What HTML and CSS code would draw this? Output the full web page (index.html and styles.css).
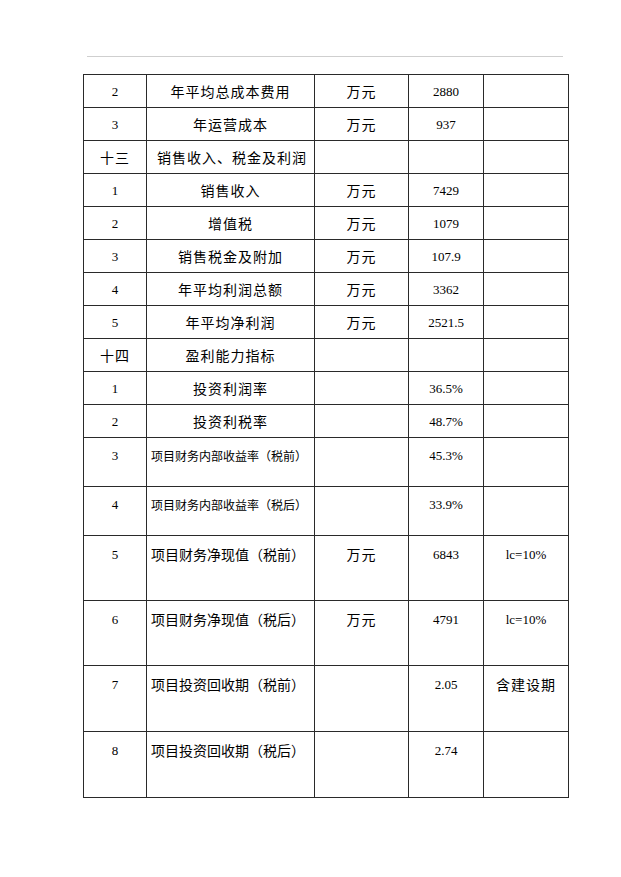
FILE: index.html
```html
<!DOCTYPE html>
<html lang="zh-CN">
<head>
<meta charset="utf-8">
<title>盈利能力指标</title>
<link rel="stylesheet" href="styles.css">
</head>
<body>
<div class="page">
  <hr class="rule">
  <table class="sheet">
    <colgroup>
      <col class="c-no"><col class="c-name"><col class="c-unit"><col class="c-val"><col class="c-note">
    </colgroup>
    <tbody>
      <tr class="r-s"><td class="num">2</td><td class="name">年平均总成本费用</td><td class="unit">万元</td><td class="num">2880</td><td></td></tr>
      <tr class="r-s"><td class="num">3</td><td class="name">年运营成本</td><td class="unit">万元</td><td class="num">937</td><td></td></tr>
      <tr class="r-s"><td class="cn">十三</td><td class="name left">销售收入、税金及利润</td><td></td><td></td><td></td></tr>
      <tr class="r-s"><td class="num">1</td><td class="name">销售收入</td><td class="unit">万元</td><td class="num">7429</td><td></td></tr>
      <tr class="r-s"><td class="num">2</td><td class="name">增值税</td><td class="unit">万元</td><td class="num">1079</td><td></td></tr>
      <tr class="r-s"><td class="num">3</td><td class="name">销售税金及附加</td><td class="unit">万元</td><td class="num">107.9</td><td></td></tr>
      <tr class="r-s"><td class="num">4</td><td class="name">年平均利润总额</td><td class="unit">万元</td><td class="num">3362</td><td></td></tr>
      <tr class="r-s"><td class="num">5</td><td class="name">年平均净利润</td><td class="unit">万元</td><td class="num">2521.5</td><td></td></tr>
      <tr class="r-s"><td class="cn">十四</td><td class="name">盈利能力指标</td><td></td><td></td><td></td></tr>
      <tr class="r-s"><td class="num">1</td><td class="name">投资利润率</td><td></td><td class="num">36.5%</td><td></td></tr>
      <tr class="r-s"><td class="num">2</td><td class="name">投资利税率</td><td></td><td class="num">48.7%</td><td></td></tr>
      <tr class="r-m"><td class="num">3</td><td class="name small">项目财务内部收益率（税前）</td><td></td><td class="num">45.3%</td><td></td></tr>
      <tr class="r-m"><td class="num">4</td><td class="name small">项目财务内部收益率（税后）</td><td></td><td class="num">33.9%</td><td></td></tr>
      <tr class="r-l"><td class="num">5</td><td class="name tight">项目财务净现值（税前）</td><td class="unit">万元</td><td class="num">6843</td><td class="num">lc=10%</td></tr>
      <tr class="r-l"><td class="num">6</td><td class="name tight">项目财务净现值（税后）</td><td class="unit">万元</td><td class="num">4791</td><td class="num">lc=10%</td></tr>
      <tr class="r-xl"><td class="num">7</td><td class="name tight">项目投资回收期（税前）</td><td></td><td class="num">2.05</td><td class="unit">含建设期</td></tr>
      <tr class="r-xl"><td class="num">8</td><td class="name tight">项目投资回收期（税后）</td><td></td><td class="num">2.74</td><td></td></tr>
    </tbody>
  </table>
</div>
</body>
</html>
```
FILE: styles.css
```css
html, body {
  margin: 0;
  padding: 0;
  background: #fff;
}

.page {
  width: 621px;
  padding-top: 56px;
  color: #000;
  font-family: "Liberation Serif", "Noto Sans CJK SC", serif;
}

.rule {
  margin: 0 0 0 87px;
  width: 476px;
  height: 0;
  border: 0;
  border-top: 1px solid #cfcfcf;
}

.sheet {
  margin: 17px 0 0 83px;
  width: 485px;
  table-layout: fixed;
  border-collapse: collapse;
}

.c-no { width: 63px; }
.c-name { width: 168px; }
.c-unit { width: 94px; }
.c-val { width: 75px; }
.c-note { width: 85px; }

.sheet td {
  border: 1px solid #2a2a2a;
  padding: 8px 0 0 0;
  vertical-align: top;
  text-align: center;
  line-height: 17px;
  white-space: nowrap;
  overflow: hidden;
}

.r-s { height: 33px; }
.r-m { height: 49px; }
.r-l { height: 65px; }
.r-xl { height: 66px; }

.r-l td, .r-xl td { padding-top: 10px; }
.r-m td { padding-top: 9px; }

.num {
  font-family: "Liberation Serif", serif;
  font-size: 13px;
}

.cn, .name, .unit {
  font-family: "Noto Sans CJK SC", "Liberation Sans", sans-serif;
  font-size: 14px;
  letter-spacing: 1px;
}

.name.left {
  text-align: left;
  padding-left: 10px;
}

.name.small {
  text-align: left;
  padding-left: 4px;
  font-size: 12px;
  letter-spacing: 0;
}

.name.tight {
  text-align: left;
  padding-left: 4px;
  letter-spacing: 0;
}
```
